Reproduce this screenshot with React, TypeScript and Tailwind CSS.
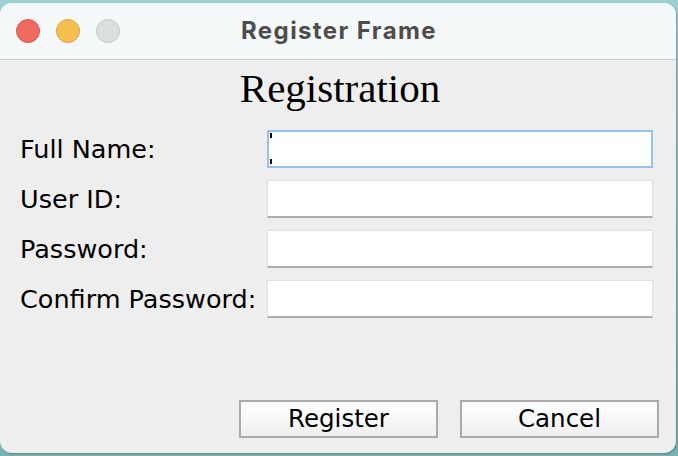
import React from 'react';

const fields = ['Full Name:', 'User ID:', 'Password:', 'Confirm Password:'];

const App: React.FC = () => {
  return (
    <div className="w-[678px] h-[456px] bg-gradient-to-b from-[#9dd0d0] to-[#78b2b2] pt-[3px] overflow-hidden">
      <div className="w-[676px] h-[450px] rounded-[12px] overflow-hidden bg-[#eeeeee] flex flex-col shadow-[1px_1px_2px_rgba(0,0,0,0.25)]">
        <div className="h-[57px] shrink-0 bg-[#f5f8f9] border-b border-[#cdcdcd] flex items-center relative">
          <div className="flex items-center gap-[16px] pl-[16px]">
            <span className="w-[24px] h-[24px] rounded-full bg-[#ee6a5f] border border-[#d8574c]" />
            <span className="w-[24px] h-[24px] rounded-full bg-[#f5bf4f] border border-[#d9a43d]" />
            <span className="w-[24px] h-[24px] rounded-full bg-[#dcdedf] border border-[#c6c8c9]" />
          </div>
          <div className="absolute inset-0 flex items-center justify-center pointer-events-none pl-[2px]">
            <span className="text-[24px] font-bold text-[#4d4d4d] tracking-[1.4px]" style={{ fontFamily: 'Inter, "Liberation Sans", sans-serif' }}>Register Frame</span>
          </div>
        </div>

        <div className="flex-1 flex flex-col pt-[5px]" style={{ fontFamily: '"DejaVu Sans", "Noto Sans", sans-serif' }}>
          <h1 className="text-center text-black text-[41px] leading-[46px] pl-[4px]" style={{ fontFamily: '"Liberation Serif", "Times New Roman", serif' }}>Registration</h1>

          <div className="mt-[19px] pl-[20px] grid grid-cols-[247px_386px] gap-y-[12px]">
            {fields.map((f, i) => (
              <React.Fragment key={f}>
                <label className="h-[38px] flex items-center text-[25.5px] text-black leading-none pt-[2px]">{f}</label>
                {i === 0 ? (
                  <div className="relative h-[38px] bg-white border-2 border-[#97c1ef]">
                    <span className="absolute left-[1px] top-[1px] w-[2px] h-[5px] bg-black" />
                    <span className="absolute left-[1px] bottom-[2px] w-[2px] h-[5px] bg-black" />
                  </div>
                ) : (
                  <div className="h-[38px] bg-white border border-[#e0e0e0] border-b-2 border-b-[#adadad]" />
                )}
              </React.Fragment>
            ))}
          </div>

          <div className="mt-[82px] flex justify-end gap-[22px] pr-[17px]">
            <button className="w-[199px] h-[38px] border-2 border-[#aaaaaa] bg-gradient-to-b from-white to-[#efefef] text-[24.5px] text-black leading-none">Register</button>
            <button className="w-[199px] h-[38px] border-2 border-[#aaaaaa] bg-gradient-to-b from-white to-[#efefef] text-[24.5px] text-black leading-none">Cancel</button>
          </div>
        </div>
      </div>
    </div>
  );
};

export default App;
